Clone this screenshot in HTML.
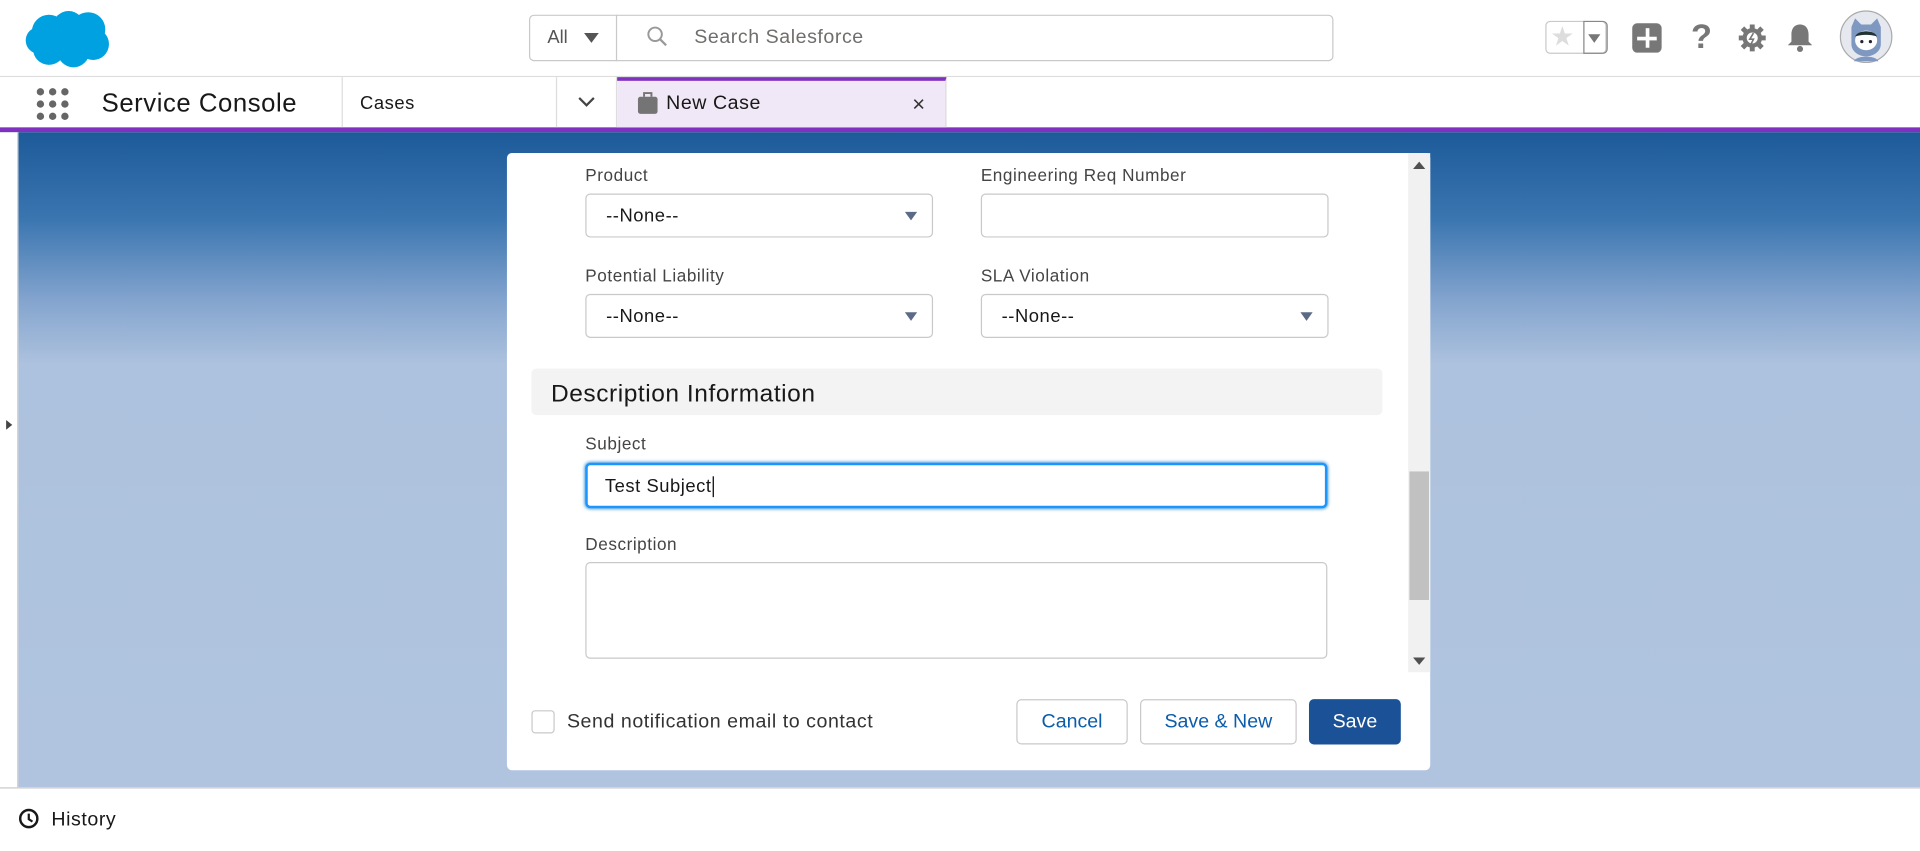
<!DOCTYPE html>
<html><head><meta charset="utf-8"><style>
html,body{margin:0;padding:0;width:1920px;height:849px;overflow:hidden;background:#fff}
#w{position:absolute;left:0;top:0;width:1568px;height:694px;transform:scale(1.22449);transform-origin:0 0;font-family:"Liberation Sans",sans-serif;color:#181818;letter-spacing:0.45px}
.a{position:absolute}
.lbl{position:absolute;font-size:14px;color:#444}
.inp{position:absolute;border:1px solid #c9c9c9;border-radius:4px;background:#fff;box-sizing:border-box;height:36px;font-size:15px;line-height:36px;padding-left:16px;color:#181818}
.car{position:absolute;right:12px;top:14px;width:0;height:0;border-left:5px solid transparent;border-right:5px solid transparent;border-top:7px solid #5a6a87}
.btn{position:absolute;top:571px;height:37px;box-sizing:border-box;border:1px solid #c9c9c9;border-radius:4px;background:#fff;color:#0b5cab;font-size:16px;line-height:36px;text-align:center;letter-spacing:0}
</style></head><body><div id="w">
<div class="a" style="left:0;top:0;width:1568px;height:62px;background:#fff;border-bottom:1px solid #ddd"></div>
<svg class="a" style="left:18px;top:6px" width="74" height="52" viewBox="0 0 74 52"><g fill="#00a1e0"><circle cx="22" cy="20" r="14"/><circle cx="38" cy="16" r="13"/><circle cx="54" cy="18" r="14"/><circle cx="58" cy="30" r="13"/><circle cx="42" cy="36" r="13"/><circle cx="22" cy="34" r="13"/><circle cx="14" cy="27" r="11"/></g></svg>
<div class="a" style="left:432px;top:12px;width:655px;height:36px;border:1px solid #c9c9c9;border-radius:4px"></div>
<div class="a" style="left:503px;top:12px;width:1px;height:38px;background:#c9c9c9"></div>
<div class="a" style="left:447px;top:22px;font-size:15px;color:#555;letter-spacing:0">All</div>
<div class="a" style="left:477px;top:27px;border-left:6px solid transparent;border-right:6px solid transparent;border-top:8px solid #555"></div>
<svg class="a" style="left:528px;top:21px" width="18" height="18" viewBox="0 0 18 18"><circle cx="7" cy="7" r="5.5" fill="none" stroke="#999" stroke-width="1.6"/><path d="M11 11l5 5" stroke="#999" stroke-width="1.8"/></svg>
<div class="a" style="left:567px;top:22px;font-size:16px;color:#706e6b">Search Salesforce</div>
<div class="a" style="left:1262px;top:17px;width:50px;height:27px;border:1px solid #c9c9c9;border-radius:4px;box-sizing:border-box"></div>
<div class="a" style="left:1293px;top:17px;width:20px;height:27px;border:1px solid #888;border-radius:0 4px 4px 0;box-sizing:border-box"></div>
<div class="a" style="left:1266px;top:17px;font-size:22px;color:#ddd">★</div>
<div class="a" style="left:1297px;top:28px;border-left:5px solid transparent;border-right:5px solid transparent;border-top:7px solid #777"></div>
<div class="a" style="left:1333px;top:19px;width:24px;height:24px;background:#777;border-radius:4px"></div>
<div class="a" style="left:1337px;top:29.5px;width:16px;height:3px;background:#fff"></div>
<div class="a" style="left:1343.5px;top:23px;width:3px;height:16px;background:#fff"></div>
<div class="a" style="left:1381px;top:14px;font-size:28px;color:#777;font-weight:bold">?</div>
<svg class="a" style="left:1419px;top:19px" width="24" height="24" viewBox="0 0 24 24"><circle cx="12" cy="12" r="8" fill="#777"/><g stroke="#777" stroke-width="4"><path d="M12 1v22M1 12h22M4 4l16 16M20 4L4 20"/></g><circle cx="12" cy="12" r="4.5" fill="#fff"/><path d="M13 8l-3 5h3l-2 4" stroke="#777" stroke-width="1.3" fill="none"/></svg>
<svg class="a" style="left:1458px;top:18px" width="24" height="26" viewBox="0 0 24 26"><path d="M12 2c-5 0-7 4-7 8v6l-3 3h20l-3-3v-6c0-4-2-8-7-8z" fill="#777"/><circle cx="12" cy="22" r="2.5" fill="#777"/></svg>
<svg class="a" style="left:1502px;top:8px" width="44" height="44" viewBox="0 0 44 44"><circle cx="22" cy="22" r="21" fill="#e5e9ef" stroke="#aaa" stroke-width="1"/><path d="M10 14l3-7 5 5h8l5-5 3 7v14c0 6-6 10-12 10s-12-4-12-10z" fill="#7e98c2"/><ellipse cx="22" cy="25" rx="9" ry="8" fill="#fff"/><path d="M13 22c2-6 16-6 18 0c-4-2-14-2-18 0z" fill="#233"/><circle cx="18.5" cy="26" r="1.3" fill="#223"/><circle cx="25.5" cy="26" r="1.3" fill="#223"/><path d="M12 42c2-5 18-5 20 0z" fill="#7e98c2"/></svg>
<div class="a" style="left:0;top:63px;width:1568px;height:41px;background:#fff"></div>
<div class="a" style="left:0;top:104px;width:1568px;height:4px;background:#8031c0"></div>
<svg class="a" style="left:29px;top:71px" width="28" height="28" viewBox="0 0 28 28" fill="#666"><circle cx="4" cy="4" r="3"/><circle cx="14" cy="4" r="3"/><circle cx="24" cy="4" r="3"/><circle cx="4" cy="14" r="3"/><circle cx="14" cy="14" r="3"/><circle cx="24" cy="14" r="3"/><circle cx="4" cy="24" r="3"/><circle cx="14" cy="24" r="3"/><circle cx="24" cy="24" r="3"/></svg>
<div class="a" style="left:83px;top:73px;font-size:21px;color:#181818">Service Console</div>
<div class="a" style="left:279px;top:63px;width:1px;height:41px;background:#ddd"></div>
<div class="a" style="left:294px;top:76px;font-size:15px">Cases</div>
<div class="a" style="left:454px;top:63px;width:1px;height:41px;background:#ddd"></div>
<svg class="a" style="left:472px;top:78px" width="14" height="10" viewBox="0 0 14 10"><path d="M1 2l6 6 6-6" fill="none" stroke="#444" stroke-width="1.8"/></svg>
<div class="a" style="left:503px;top:63px;width:1px;height:41px;background:#ddd"></div>
<div class="a" style="left:504px;top:63px;width:269px;height:41px;background:#f1e8f7;border-top:3px solid #8031c0;box-sizing:border-box;border-right:1px solid #ddd"></div>
<svg class="a" style="left:520px;top:74px" width="18" height="20" viewBox="0 0 18 20"><rect x="1" y="5" width="16" height="14" rx="2" fill="#747474"/><path d="M6 5V2h6v3" fill="none" stroke="#747474" stroke-width="1.6"/></svg>
<div class="a" style="left:544px;top:76px;font-size:16px">New Case</div>
<div class="a" style="left:745px;top:75px;font-size:18px;color:#333">×</div>
<div class="a" style="left:0;top:108px;width:1568px;height:535px;background:linear-gradient(#1d5a99 0px,#3a75b0 70px,#86a6cf 140px,#adc2de 190px,#b0c4df 535px)"></div>
<div class="a" style="left:0;top:108px;width:14px;height:535px;background:#fff;border-right:1px solid #ccc"></div>
<div class="a" style="left:5px;top:343px;border-top:4px solid transparent;border-bottom:4px solid transparent;border-left:5px solid #444"></div>
<div class="a" style="left:414px;top:125px;width:754px;height:504px;background:#fff;border-radius:4px"></div>
<div class="a" style="left:1150px;top:125px;width:18px;height:424px;background:#f1f1f1"></div>
<div class="a" style="left:1151px;top:385px;width:16px;height:105px;background:#c1c1c1"></div>
<div class="a" style="left:1154px;top:132px;border-left:5px solid transparent;border-right:5px solid transparent;border-bottom:6px solid #505050"></div>
<div class="a" style="left:1154px;top:537px;border-left:5px solid transparent;border-right:5px solid transparent;border-top:6px solid #505050"></div>
<div class="lbl" style="left:478px;top:135px">Product</div>
<div class="lbl" style="left:801px;top:135px">Engineering Req Number</div>
<div class="inp" style="left:478px;top:158px;width:284px">--None--<div class="car"></div></div>
<div class="inp" style="left:801px;top:158px;width:284px"></div>
<div class="lbl" style="left:478px;top:217px">Potential Liability</div>
<div class="lbl" style="left:801px;top:217px">SLA Violation</div>
<div class="inp" style="left:478px;top:240px;width:284px">--None--<div class="car"></div></div>
<div class="inp" style="left:801px;top:240px;width:284px">--None--<div class="car"></div></div>
<div class="a" style="left:434px;top:301px;width:695px;height:38px;background:#f3f3f3;border-radius:4px"></div>
<div class="a" style="left:450px;top:311px;font-size:20px;color:#181818">Description Information</div>
<div class="lbl" style="left:478px;top:354px">Subject</div>
<div class="inp" style="left:478px;top:378px;width:606px;height:37px;border:2px solid #1b96ff;padding-left:14px;box-shadow:0 0 3px #0176d3;line-height:35px">Test Subject<span style="border-left:1px solid #000;margin-left:1px"></span></div>
<div class="lbl" style="left:478px;top:436px">Description</div>
<div class="inp" style="left:478px;top:459px;width:606px;height:79px"></div>
<div class="a" style="left:434px;top:580px;width:19px;height:19px;border:1px solid #c9c9c9;border-radius:3px;box-sizing:border-box"></div>
<div class="a" style="left:463px;top:581px;font-size:16px;color:#333">Send notification email to contact</div>
<div class="btn" style="left:830px;width:91px">Cancel</div>
<div class="btn" style="left:931px;width:128px">Save &amp; New</div>
<div class="btn" style="left:1069px;width:75px;background:#1b5297;border-color:#1b5297;color:#fff">Save</div>
<div class="a" style="left:0;top:643px;width:1568px;height:51px;background:#fff;border-top:1px solid #ccc"></div>
<svg class="a" style="left:15px;top:660px" width="17" height="17" viewBox="0 0 17 17"><circle cx="8.5" cy="8.5" r="7" fill="none" stroke="#181818" stroke-width="2"/><path d="M8.5 4.5v4.5l3 2" fill="none" stroke="#181818" stroke-width="1.8"/></svg>
<div class="a" style="left:42px;top:661px;font-size:16px">History</div>
</div></body></html>
